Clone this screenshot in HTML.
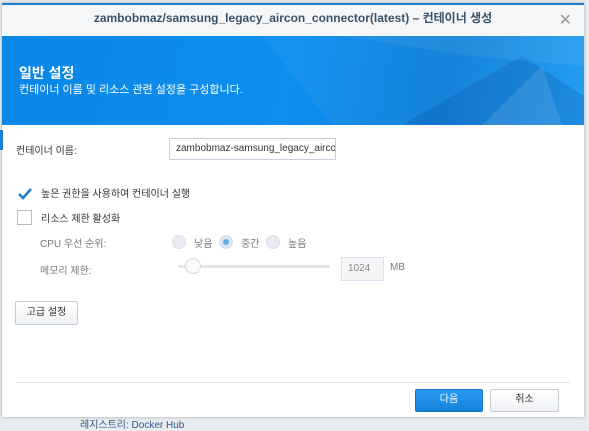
<!DOCTYPE html>
<html><head><meta charset="utf-8"><style>
*{margin:0;padding:0;box-sizing:border-box}
body{width:589px;height:423px;overflow:hidden;background:#e9ecef;font-family:"Liberation Sans","Noto Sans CJK KR",sans-serif;position:relative}
.dlg{position:absolute;left:2px;top:3px;width:582px;height:414px;background:#fff;box-shadow:0 0 3px rgba(0,0,0,.3)}
.hd{height:33px;background:#f4f6f8;border-top:2px solid #1a7fd0;text-align:center;font-size:12px;font-weight:bold;color:#3b5369;line-height:27px}
.x{position:absolute;right:12px;top:4px;font-size:16px;color:#999;font-weight:normal}
.ban{position:absolute;top:33px;left:0;width:582px;height:89px;background:linear-gradient(100deg,#0a86e6 0%,#0d8ff0 50%,#0c7fd8 75%,#1a9af2 100%);overflow:hidden}
.ban h1{position:absolute;left:17px;top:27px;font-size:14px;color:#fff;font-weight:bold}
.ban p{position:absolute;left:17px;top:45px;font-size:11px;color:#fff}
.t{position:absolute;font-size:10px;color:#333}
.g{color:#777}
.inp{position:absolute;border:1px solid #ccd;background:#fff;font-size:10px;color:#333;padding-left:6px}
.cb{position:absolute;width:15px;height:15px;border:1px solid #bbb;background:#fff}
.rd{position:absolute;width:14px;height:14px;border-radius:50%;border:1px solid #dde;background:#e8ecf0}
.btn{position:absolute;border:1px solid #c5ccd3;background:linear-gradient(#fff,#eef1f4);font-size:10px;color:#333;text-align:center;border-radius:2px}
</style></head><body>
<div style="position:absolute;left:80px;top:416px;font-size:10px;color:#2a5a8a">레지스트리: Docker Hub</div>
<div class="dlg">
<div class="hd">zambobmaz/samsung_legacy_aircon_connector(latest) – 컨테이너 생성<span class="x">✕</span></div>
<div class="ban">
<svg width="582" height="89" style="position:absolute;left:0;top:0">
<polygon points="260,0 582,0 582,89 330,89" fill="rgba(255,255,255,0.04)"/>
<polygon points="400,89 520,20 582,60 582,89" fill="rgba(0,40,120,0.15)"/>
<polygon points="480,89 540,30 560,89" fill="rgba(255,255,255,0.10)"/>
<polygon points="340,0 582,0 582,30 470,20" fill="rgba(255,255,255,0.06)"/>
</svg>
<h1>일반 설정</h1><p>컨테이너 이름 및 리소스 관련 설정을 구성합니다.</p></div>
<div style="position:absolute;left:-2px;top:127px;width:3px;height:20px;background:#1a7fd0"></div>
<div class="t" style="left:14px;top:139px">컨테이너 이름:</div>
<div class="inp" style="left:167px;top:135px;width:167px;height:22px;line-height:20px;overflow:hidden;white-space:nowrap">zambobmaz-samsung_legacy_aircon</div>
<div class="cb" style="left:15px;top:183px;border:none;background:none"><svg width="16" height="16"><path d="M2 8 L6 12 L14 3" stroke="#1a7fd0" stroke-width="2.6" fill="none"/></svg></div>
<div class="t" style="left:39px;top:182px">높은 권한을 사용하여 컨테이너 실행</div>
<div class="cb" style="left:15px;top:207px"></div>
<div class="t" style="left:39px;top:207px">리소스 제한 활성화</div>
<div class="t g" style="left:38px;top:232px">CPU 우선 순위:</div>
<div class="rd" style="left:170px;top:232px"></div><div class="t g" style="left:192px;top:232px">낮음</div>
<div class="rd" style="left:217px;top:232px;background:#d6e6f5"><div style="position:absolute;left:3px;top:3px;width:6px;height:6px;border-radius:50%;background:#6aa8e0"></div></div><div class="t g" style="left:239px;top:232px">중간</div>
<div class="rd" style="left:264px;top:232px"></div><div class="t g" style="left:286px;top:232px">높음</div>
<div class="t g" style="left:38px;top:259px">메모리 제한:</div>
<div style="position:absolute;left:176px;top:262px;width:152px;height:3px;background:#e2e6ea;border-radius:2px"></div>
<div style="position:absolute;left:183px;top:255px;width:16px;height:16px;border-radius:50%;border:1px solid #d5d9dd;background:#fafafa"></div>
<div class="inp" style="left:339px;top:254px;width:43px;height:24px;line-height:22px;background:#f4f5f6;color:#888;border-color:#dde">1024</div>
<div class="t g" style="left:388px;top:259px">MB</div>
<div class="btn" style="left:13px;top:298px;width:63px;height:24px;line-height:21px">고급 설정</div>
<div style="position:absolute;left:15px;top:379px;width:553px;height:1px;background:#e3e6e9"></div>
<div class="btn" style="left:413px;top:386px;width:68px;height:23px;line-height:20px;background:linear-gradient(#2a9af0,#1583dc);border-color:#1479cc;color:#fff">다음</div>
<div class="btn" style="left:488px;top:386px;width:69px;height:23px;line-height:20px">취소</div>
</div>
</body></html>
